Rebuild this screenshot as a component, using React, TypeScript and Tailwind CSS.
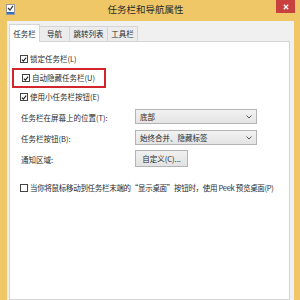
import { ReactNode } from "react";

const font = { fontFamily: '"Noto Sans CJK SC", "Noto Sans", sans-serif' };

function CheckBox({ checked }: { checked?: boolean }) {
    return (
        <span className="w-[8px] h-[8px] border border-[#444] bg-white flex items-center justify-center shrink-0">
            {checked && (
                <svg width="7" height="7" viewBox="0 0 7 7">
                    <path d="M1 3.6 L2.8 5.4 L6 1.4" stroke="#222" strokeWidth="1.3" fill="none" />
                </svg>
            )}
        </span>
    );
}

function CheckRow({ checked, label, boxed, tight }: { checked?: boolean; label: string; boxed?: boolean; tight?: boolean }) {
    return (
        <div
            className={
                boxed
                    ? "ml-[2px] w-[94px] h-[20px] border-2 border-[#d3262c] flex items-center gap-[2px] pl-[8px]"
                    : "ml-[10px] h-[12px] flex items-center gap-[2px]"
            }
        >
            <CheckBox checked={checked} />
            <span
                className={`text-[7.5px] leading-none text-[#2a2a2a] whitespace-nowrap ${tight ? "tracking-[-0.3px]" : ""}`}
            >
                {label}
            </span>
        </div>
    );
}

function Combo({ text, width }: { text: string; width: string }) {
    return (
        <div
            className={`${width} h-[15px] border border-[#b4b4b4] bg-gradient-to-b from-[#f2f2f2] to-[#e4e4e4]
                        flex items-center justify-between pl-[4px] pr-[4px]`}
        >
            <span className="text-[7.5px] leading-none text-[#2a2a2a]">{text}</span>
            <svg width="6" height="4" viewBox="0 0 6 4">
                <path d="M0.5 0.5 L3 3 L5.5 0.5" stroke="#555" strokeWidth="1" fill="none" />
            </svg>
        </div>
    );
}

function FieldRow({ label, children, className }: { label: string; children: ReactNode; className: string }) {
    return (
        <div className={`flex items-center ${className}`}>
            <span className="ml-[11px] w-[114px] pt-[3px] text-[7.5px] leading-none text-[#2a2a2a]">{label}</span>
            {children}
        </div>
    );
}

// ── Tabs ────────────────────────────────────────────────

const tabs = [
    { name: "任务栏", w: "w-[31px]" },
    { name: "导航", w: "w-[30px]" },
    { name: "跳转列表", w: "w-[38px]" },
    { name: "工具栏", w: "w-[30px]" },
];

export default function App() {
    return (
        <div className="w-[300px] h-[300px] bg-[#efc766] flex flex-col overflow-hidden" style={font}>
            {/* Title bar */}
            <div className="h-[21px] flex items-start shrink-0">
                <div className="ml-[6px] mt-[4px] w-[9px] h-[11px] bg-white border border-[#9a9a9a] flex flex-col justify-between">
                    <svg width="7" height="6" viewBox="0 0 7 6">
                        <path d="M1 3 L3 5 L6 0.8" stroke="#333" strokeWidth="1.2" fill="none" />
                    </svg>
                    <div className="h-[2px] bg-[#2f6fc4]" />
                </div>
                <div className="flex-1 text-center mt-[5px] text-[9.5px] leading-none text-[#2b2b2b]">
                    任务栏和导航属性
                </div>
                <div className="mr-[5px] w-[19px] h-[13px] bg-[#c9413f] flex items-center justify-center">
                    <svg width="6" height="6" viewBox="0 0 6 6">
                        <path d="M0.8 0.8 L5.2 5.2 M5.2 0.8 L0.8 5.2" stroke="#fff" strokeWidth="1.3" />
                    </svg>
                </div>
            </div>

            {/* Client area */}
            <div className="flex-1 ml-[7px] mr-[6px] bg-[#f0f0f0] flex flex-col pt-[3px]">
                <div className="flex items-end ml-[2px] h-[17px]">
                    {tabs.map((t, i) =>
                        i === 0 ? (
                            <div
                                key={t.name}
                                className={`${t.w} h-[18px] bg-white border border-b-0 border-[#d5d5d5] flex items-center justify-center text-[7.5px] leading-none text-[#2a2a2a] relative top-[1px] z-10`}
                            >
                                {t.name}
                            </div>
                        ) : (
                            <div
                                key={t.name}
                                className={`${t.w} h-[15px] bg-[#ececec] border border-l-0 border-b-0 border-[#d5d5d5] flex items-center justify-center text-[7.5px] leading-none text-[#2a2a2a]`}
                            >
                                {t.name}
                            </div>
                        )
                    )}
                </div>

                {/* Panel */}
                <div className="flex-1 ml-[2px] mr-[4px] bg-white border border-[#d5d5d5] flex flex-col">
                    <div className="mt-[11px]">
                        <CheckRow checked label="锁定任务栏(L)" />
                    </div>
                    <div className="mt-[3px]">
                        <CheckRow checked boxed label="自动隐藏任务栏(U)" />
                    </div>
                    <div className="mt-[3px]">
                        <CheckRow checked label="使用小任务栏按钮(E)" />
                    </div>

                    <FieldRow label="任务栏在屏幕上的位置(T):" className="mt-[6px]">
                        <Combo text="底部" width="w-[122px]" />
                    </FieldRow>
                    <FieldRow label="任务栏按钮(B):" className="mt-[6px]">
                        <Combo text="始终合并、隐藏标签" width="w-[122px]" />
                    </FieldRow>
                    <FieldRow label="通知区域:" className="mt-[5px]">
                        <div className="w-[53px] h-[17px] border border-[#b4b4b4] bg-gradient-to-b from-[#f0f0f0] to-[#e2e2e2] flex items-center justify-center text-[7.5px] leading-none text-[#2a2a2a]">
                            自定义(C)...
                        </div>
                    </FieldRow>

                    <div className="mt-[15px]">
                        <CheckRow tight label="当你将鼠标移动到任务栏末端的“显示桌面”按钮时，使用 Peek 预览桌面(P)" />
                    </div>
                </div>
            </div>
        </div>
    );
}
